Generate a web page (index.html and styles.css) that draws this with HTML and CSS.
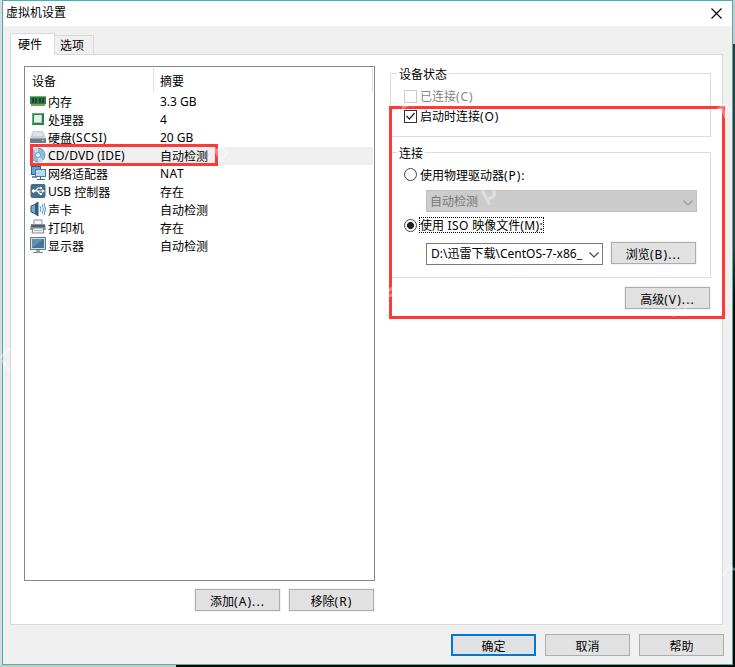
FILE: index.html
```html
<!DOCTYPE html>
<html lang="zh-CN">
<head>
<meta charset="utf-8">
<title>虚拟机设置</title>
<link rel="stylesheet" href="styles.css">
</head>
<body>
<div class="desktop">
<main class="dialog">
  <header class="titlebar">
    <span class="title">虚拟机设置</span>
    <svg class="close" width="11" height="11" viewBox="0 0 11 11"><path d="M.5.5l10 10M10.5.5l-10 10" stroke="#000" stroke-width="1.1"/></svg>
  </header>
  <nav class="tabs"><span class="tab active">硬件</span><span class="tab">选项</span></nav>
  <section class="page">
    <div class="left">
      <div class="list">
        <div class="row head"><span class="device">设备</span><span class="summary">摘要</span></div>
        <div class="row"><span class="device"><svg width="16" height="16"><path d="M0 3h16v8h-1v2H1v-2H0z" fill="#24833d"/><path d="M0 3.5h16" stroke="#65b878"/><path d="M2 5h2v5H2zm3 0h2v5H5zm4 0h2v5H9zm3 0h2v5h-2z" fill="#303b34"/><path d="M1.5 12h13" stroke="#c8c773" stroke-width="2" stroke-dasharray="1 1"/></svg>内存</span><span class="summary latin">3.3 GB</span></div>
        <div class="row"><span class="device"><svg width="16" height="16"><path d="M2 2h12v12H2z" fill="#238845"/><path d="M2.5 13V2.5H13" fill="none" stroke="#5fb377"/><rect x="4" y="4" width="8" height="8" rx="1" fill="#e9eeea"/><path d="M5 11.5h6.5V5" fill="none" stroke="#b5c8b9"/></svg>处理器</span><span class="summary latin">4</span></div>
        <div class="row"><span class="device"><svg width="16" height="16"><path d="M3 2h10l3 7H0z" fill="#cbd0d5"/><path d="M4 3h8l1 4H3z" fill="#e0e3e6"/><path d="M0 9h16v5H0z" fill="#717b87"/><path d="M0 9.5h16" stroke="#9ba4ae"/><path d="M12 11h2v1h-2z" fill="#9eeb86"/></svg>硬盘<i class="s-scsi latin">(SCSI)</i></span><span class="summary latin">20 GB</span></div>
        <div class="row selected"><span class="device"><svg width="16" height="16"><circle cx="8" cy="8" r="7" fill="#91bddd" stroke="#6394bd"/><path d="M8 8L3 2.5A7 7 0 0 1 8 1zM8 8l5 5.5A7 7 0 0 1 8 15z" fill="#c4dff0"/><circle cx="8" cy="8" r="2.5" fill="#edf6fb" stroke="#6b9abd"/></svg><i class="s-cd latin">CD/DVD (IDE)</i></span><span class="summary">自动检测</span></div>
        <div class="row"><span class="device"><svg width="16" height="16"><rect x="1.5" y="1.5" width="9" height="8" fill="#69a5d3" stroke="#295f91"/><path d="M2 12h5" stroke="#81909c" stroke-width="2"/><rect x="5.5" y="4.5" width="10" height="7" fill="#b8dcef" stroke="#477ca5"/><path d="M10.5 12v2M7 14.5h8" stroke="#49647b"/></svg>网络适配器</span><span class="summary latin"><i class="s-nat">NAT</i></span></div>
        <div class="row"><span class="device"><svg width="16" height="16"><rect x=".5" y="1" width="15" height="14" rx="2" fill="#466d8c"/><path d="M3 8h10M5 8l3-3h2M7 8l3 3h1" fill="none" stroke="#fff" stroke-width="1.2"/><circle cx="3.5" cy="8" r="1.7" fill="#fff"/><path d="M12 6l3 2-3 2zM10 4h2v2h-2zM10 10h2v2h-2z" fill="#fff"/></svg><i class="latin">USB </i>控制器</span><span class="summary">存在</span></div>
        <div class="row"><span class="device"><svg width="16" height="16"><path d="M1 5l3-1 4-3v14l-4-3-3-1z" fill="#7faac7" stroke="#285579"/><path d="M5 3l3-2v14l-3-2z" fill="#315f85"/><path d="M10 5q2 3 0 6M12 3q3 5 0 10M14 2q3 6 0 12" fill="none" stroke="#4d94c8"/></svg>声卡</span><span class="summary">自动检测</span></div>
        <div class="row"><span class="device"><svg width="16" height="16"><path d="M4 1h8v5H4z" fill="#f4f6f8" stroke="#83909c"/><path d="M1 5h14l1 6H0z" fill="#858f9a"/><path d="M1 6h14v2H1z" fill="#545e6a"/><path d="M3 9h10l1 5H2z" fill="#edf0f2" stroke="#7e8994"/><path d="M4 11.5h8" stroke="#b4bbc1"/></svg>打印机</span><span class="summary">存在</span></div>
        <div class="row"><span class="device"><svg width="16" height="16"><path d="M.5.5h15v12H.5z" fill="#d6dde4" stroke="#60798f"/><path d="M2 2h12v9H2z" fill="#47769c"/><path d="M2 2h11L2 11z" fill="#628fae"/><path d="M6 13h4v2H6z" fill="#9ba5ad"/><path d="M3 15.5h10" stroke="#7d8b98"/></svg>显示器</span><span class="summary">自动检测</span></div>
      </div>
      <div class="actions"><button>添加<i class="wide">(A)...</i></button><button>移除<i class="wide">(R)</i></button></div>
    </div>
    <div class="right">
      <fieldset class="status">
        <legend>设备状态</legend>
        <label class="option muted"><span class="check"></span>已连接<i class="key">(C)</i></label>
        <label class="option second"><span class="check"><svg width="11" height="11"><path d="M1.5 5l3 3L9.5 2" fill="none" stroke="#222" stroke-width="1.2"/></svg></span>启动时连接<i class="key">(O)</i></label>
      </fieldset>
      <fieldset class="connection">
        <legend>连接</legend>
        <label class="option physical"><span class="radio"></span>使用物理驱动器<i class="key">(P):</i></label>
        <div class="combo disabled"><span>自动检测</span><svg width="10" height="6"><path d="M.5.5L5 5 9.5.5" fill="none" stroke="#999" stroke-width="1.2"/></svg></div>
        <label class="option iso"><span class="radio on"></span><span class="focus">使用<i class="s-iso"> ISO </i>映像文件<i class="s-m">(M):</i></span></label>
        <div class="path"><div class="combo"><span><i>D:\</i>迅雷下载<i>\CentOS-7-x86_</i></span><svg width="10" height="6"><path d="M.5.5L5 5 9.5.5" fill="none" stroke="#444" stroke-width="1.2"/></svg></div><button>浏览<i class="wide">(B)...</i></button></div>
      </fieldset>
      <button class="advanced">高级<i class="wide">(V)...</i></button>
    </div>
  </section>
  <footer><button class="primary">确定</button><button>取消</button><button>帮助</button></footer>
</main>
<div class="mark device-mark"></div>
<div class="mark connection-mark"></div>
<svg class="watermark" width="735" height="667" fill="none" stroke="#fff" stroke-opacity=".35" stroke-width="3">
  <path d="M214 148l8 14M216 152q5-7 9-2t-4 8M481 188l9 17M483 191q5-7 10-1t-5 9"/>
  <path d="M402 108l8-4M412 106l8-4M717 110l8-5 6 6M722 108l4 10M387 292l7-5M386 297l8-3"/>
  <path d="M672 316l7-8 3 6 6-10M0 358l10-10M2 360l8 12M723 576l6-10 6 4"/>
</svg>
</div>
</body>
</html>
```

FILE: styles.css
```css
* { box-sizing: border-box; }
body { margin: 0; font: 12px/18px "Noto Sans", "Noto Sans CJK SC", sans-serif; color: #000; }
i { font-style: normal; white-space: pre; }
svg { display: block; flex: none; }
.desktop { position: relative; width: 735px; height: 667px; padding: 0 2px 2px; overflow: hidden; background: linear-gradient(#c9c9c9, #c9c9c9) 0 665px / 176px 2px no-repeat, linear-gradient(#d9dcdc, #d9dcdc) 0 0 / 2px 667px no-repeat, linear-gradient(#c5c9c9 0 44px, #303b3a 44px 250px, #000 310px) 733px 0 / 2px 667px no-repeat, #000; }
.dialog { display: flex; flex-direction: column; width: 731px; height: 665px; border: 1px solid #40b3b5; background: #f0f0f0; }
.titlebar { display: flex; justify-content: space-between; height: 25px; padding: 3px 10px 0 3px; background: #fff; }
.close { margin-top: 4px; }
.tabs { display: flex; align-items: flex-end; height: 29px; padding-left: 7px; z-index: 1; margin-bottom: -1px; }
.tab { width: 39px; height: 19px; padding: 1px 0 0 5px; border: 1px solid #d9d9d9; border-left: 0; border-bottom: 0; }
.tab.active { width: 45px; height: 22px; padding: 2px 0 0 7px; border-left: 1px solid #d9d9d9; background: #fff; }
.tab:not(.active) { margin-bottom: 1px; }
.page { display: flex; gap: 15px; width: 713px; height: 571px; margin-left: 7px; padding: 11px 0 0 13px; border: 1px solid #d9d9d9; background: #fff; }
.left { width: 351px; }
.list { height: 515px; padding: 1px; border: 1px solid #828790; }
.row { display: flex; height: 18px; line-height: 19px; }
.head { height: 24px; margin-bottom: 1px; border-right: 1px solid #e0e0e0; padding-top: 5px; line-height: 18px; }
.device { display: flex; width: 128px; padding-left: 4px; }
.device svg { margin: 0 2px 0 0; }
.head .device { padding-left: 6px; border-right: 1px solid #e0e0e0; margin-top: -5px; padding-top: 5px; }
.summary { padding-left: 6px; }
.latin { line-height: 17px; }
.selected { background: linear-gradient(#f0f0f0, #f0f0f0) 21px 0 no-repeat; }
.s-scsi { letter-spacing: .5px; }
.s-cd { letter-spacing: .12px; }
.s-nat { letter-spacing: .5px; }
.s-iso { letter-spacing: .4px; }
.s-m { letter-spacing: .4px; }
.key { letter-spacing: .9px; }
.wide { letter-spacing: 1.1px; }
.actions { display: flex; justify-content: flex-end; gap: 9px; margin: 8px 1px 0 0; }
button { width: 85px; height: 22px; padding: 2px 0 0; border: 1px solid #adadad; background: #e1e1e1; font: inherit; line-height: 17px; box-shadow: 0 0 0 1px #f3f3f3; color: #000; white-space: nowrap; }
.right { display: flex; flex-direction: column; width: 321px; padding-top: 7px; }
fieldset { position: relative; width: 321px; min-width: 0; margin: 0; border: 1px solid #dcdcdc; }
legend { position: absolute; left: 6px; top: -7px; height: 16px; padding: 0 2px; line-height: 16px; background: #fff; }
.status { height: 64px; padding: 14px 0 0 13px; }
.option { display: flex; align-items: center; height: 18px; line-height: 20px; }
.option.second { margin-top: 2px; }
.muted { color: #848484; }
.check { width: 13px; height: 13px; margin: -2px 3px 0 0; border: 1px solid #333; background: #fff; }
.muted .check { border-color: #ccc; }
.radio { width: 13px; height: 13px; margin-right: 3px; border: 1px solid #444; border-radius: 50%; background: #fff; }
.physical .radio { margin-top: -3px; }
.radio.on { background: radial-gradient(circle, #222 0 3.2px, #fff 3.8px); }
.connection { height: 126px; margin-top: 15px; padding: 14px 0 0 13px; }
.combo { display: flex; align-items: center; justify-content: space-between; width: 177px; height: 22px; padding: 0 3px 0 4px; border: 1px solid #7a7a7a; background: #fff; white-space: nowrap; line-height: 20px; }
.combo svg { margin-top: 2px; }
.combo.disabled { width: 271px; margin: 5px 0 4px 22px; border-color: #bfbfbf; background: #ccc; color: #777; padding: 1px 3px 0; }
.focus { height: 16px; line-height: 17px; outline: 1px dotted #000; outline-offset: -1px; margin-left: -1px; padding: 0 1px; }
.path { display: flex; gap: 8px; margin: 9px 0 0 22px; }
.path button { margin-top: -1px; }
.advanced { margin: 9px 0 0 235px; }
footer { display: flex; justify-content: flex-end; gap: 9px; padding: 9px 8px 0 0; }
footer button { box-shadow: none; }
.primary { border: 2px solid #0078d7; padding-top: 2px; }
.mark { position: absolute; border: 3px solid #ff3838; }
.device-mark { left: 30px; top: 144px; width: 188px; height: 22px; }
.connection-mark { left: 389px; top: 106px; width: 336px; height: 213px; }
.watermark { position: absolute; inset: 0; pointer-events: none; }
```
